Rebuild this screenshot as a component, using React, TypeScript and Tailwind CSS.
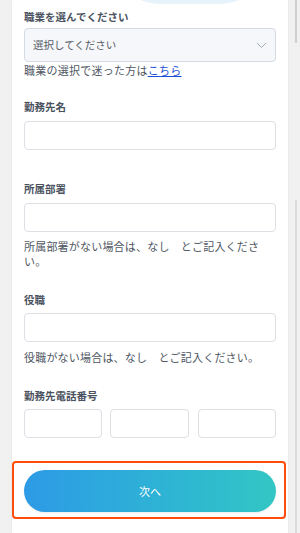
import React from "react";

const Label = ({ children, className = "" }: { children: React.ReactNode; className?: string }) => (
  <div className={`text-[10.5px] leading-[16px] font-bold text-[#4a5260] ${className}`}>{children}</div>
);

const Input = ({ className = "" }: { className?: string }) => (
  <div className={`h-[29px] rounded-[4px] border border-[#dcdfe4] bg-white ${className}`} />
);

export default function App() {
  return (
    <div className="w-[300px] h-[533px] flex bg-[#f1f1f1] overflow-hidden font-['Noto_Sans_CJK_JP','Noto_Sans',sans-serif]">
      <div className="w-3 shrink-0" />
      <div className="relative w-[276px] shrink-0 bg-white px-3 shadow-[0_0_2px_rgba(0,0,0,0.08)]">
        <div className="absolute left-[88px] top-[-120px] w-[180px] h-[124px] rounded-full bg-[#e6f3fb]" />
        <div className="relative">
          <Label className="pt-[9px]">職業を選んでください</Label>
          <div className="mt-[3px] h-[34px] rounded-[4px] border border-[#d5dbe3] bg-[#f5f7fa] flex items-center justify-between pl-[8px] pr-[8px]">
            <span className="text-[10.5px] text-[#555c66]">選択してください</span>
            <svg width="11" height="7" viewBox="0 0 11 7" fill="none">
              <path d="M1 1l4.5 4.5L10 1" stroke="#a3abb6" strokeWidth="1" />
            </svg>
          </div>
          <div className="text-[11px] leading-[16px] tracking-[0.25px] text-[#4f5763]">
            職業の選択で迷った方は<span className="text-[#1d4ed8] underline">こちら</span>
          </div>

          <Label className="mt-[21px]">勤務先名</Label>
          <Input className="mt-[6px]" />

          <Label className="mt-[31px]">所属部署</Label>
          <Input className="mt-[6px]" />
          <div className="mt-[7px] pr-[14px] text-[11px] leading-[15px] tracking-[0.2px] text-[#4f5763]">
            所属部署がない場合は、なし　とご記入ください。
          </div>

          <Label className="mt-[23px]">役職</Label>
          <Input className="mt-[5px]" />
          <div className="mt-[7px] text-[11px] leading-[16px] tracking-[0.2px] text-[#4f5763]">
            役職がない場合は、なし　とご記入ください。
          </div>

          <Label className="mt-[23px]">勤務先電話番号</Label>
          <div className="mt-[5px] flex gap-[8px]">
            <Input className="w-[78px]" />
            <Input className="w-[79px]" />
            <Input className="w-[78px] ml-[1px]" />
          </div>

          <div className="mt-[23px] ml-[-12px] w-[274px] rounded-[4px] border-2 border-[#ff4d0d] pl-[10px] pt-[7px] pb-[5px]">
            <div className="w-[252px] h-[42px] rounded-full bg-gradient-to-r from-[#2e9ae6] to-[#33c6c4] flex items-center justify-center shadow-[0_1px_2px_rgba(0,0,0,0.08)]">
              <span className="text-[11px] text-white">次へ</span>
            </div>
          </div>
        </div>
      </div>
      <div className="w-3 shrink-0 flex flex-col pl-[7px]">
        <div className="w-[2px] h-[43px] bg-[#cfcfcf]" />
        <div className="h-[157px]" />
        <div className="w-[2px] flex-1 bg-[#dcdcdc]" />
      </div>
    </div>
  );
}
